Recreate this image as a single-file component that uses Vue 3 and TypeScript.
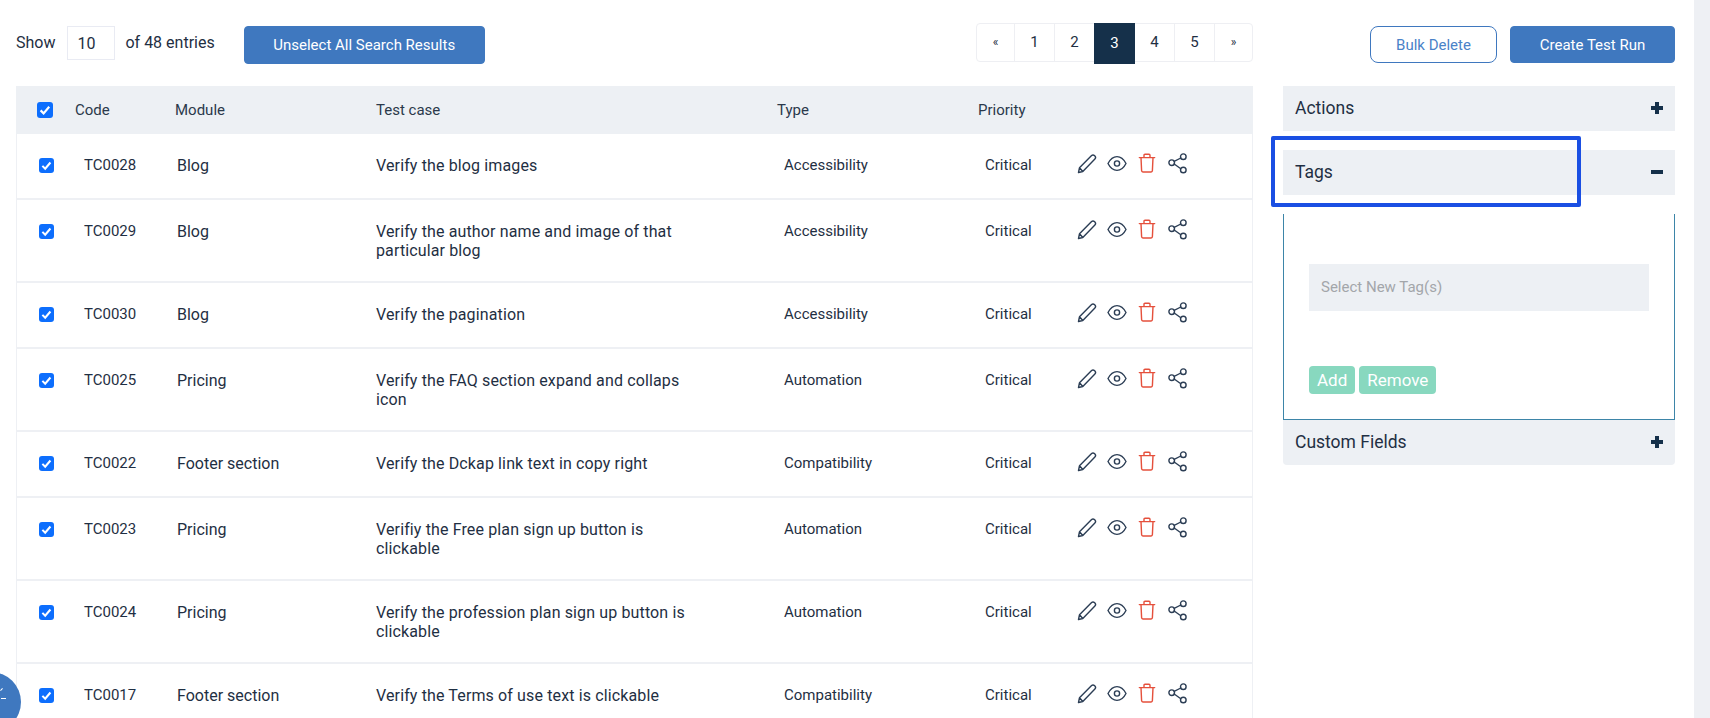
<script setup lang="ts">
interface TestCase {
  code: string
  module: string
  title: string
  type: string
}

const cases: TestCase[] = [
  { code: 'TC0028', module: 'Blog', title: 'Verify the blog images', type: 'Accessibility' },
  { code: 'TC0029', module: 'Blog', title: 'Verify the author name and image of that particular blog', type: 'Accessibility' },
  { code: 'TC0030', module: 'Blog', title: 'Verify the pagination', type: 'Accessibility' },
  { code: 'TC0025', module: 'Pricing', title: 'Verify the FAQ section expand and collaps icon', type: 'Automation' },
  { code: 'TC0022', module: 'Footer section', title: 'Verify the Dckap link text in copy right', type: 'Compatibility' },
  { code: 'TC0023', module: 'Pricing', title: 'Verifiy the Free plan sign up button is clickable', type: 'Automation' },
  { code: 'TC0024', module: 'Pricing', title: 'Verify the profession plan sign up button is clickable', type: 'Automation' },
  { code: 'TC0017', module: 'Footer section', title: 'Verify the Terms of use text is clickable', type: 'Compatibility' },
]

const pages = ['«', '1', '2', '3', '4', '5', '»']
</script>

<template>
  <div class="page">
    <main class="main">
      <div class="toolbar">
        <div class="left-tools">
          <span class="show-label">Show</span>
          <span class="size-box">10</span>
          <span class="entries">of 48 entries</span>
          <button class="btn btn-primary unselect">Unselect All Search Results</button>
        </div>
        <ul class="pagination">
          <li v-for="p in pages" :key="p" :class="{ active: p === '3', arrow: p === '«' || p === '»' }">{{ p }}</li>
        </ul>
      </div>

      <div class="table">
        <div class="row head">
          <span class="cell-check"><span class="check big"><svg viewBox="0 0 16 16"><path d="M3.6 8.4l3 3 5.6-6.6" /></svg></span></span>
          <span>Code</span>
          <span>Module</span>
          <span>Test case</span>
          <span>Type</span>
          <span>Priority</span>
          <span></span>
        </div>
        <div v-for="item in cases" :key="item.code" class="row">
          <span class="cell-check"><span class="check"><svg viewBox="0 0 16 16"><path d="M3.6 8.4l3 3 5.6-6.6" /></svg></span></span>
          <span class="code">{{ item.code }}</span>
          <span class="module">{{ item.module }}</span>
          <span class="title">{{ item.title }}</span>
          <span class="type">{{ item.type }}</span>
          <span class="priority">Critical</span>
          <span class="icons">
            <svg viewBox="0 0 20 21" class="ic"><path d="M1.5 19.5l1-4.800L14.600 2.600a2 2 0 0 1 2.800 0l.5.5a2 2 0 0 1 0 2.800L5.800 18.500 1.500 19.500zM2.500 14.700l3.300 3.800" /></svg>
            <svg viewBox="0 0 20 21" class="ic"><path d="M1 10.500C3.300 6 6.300 3.600 10 3.600s6.700 2.400 9 6.900c-2.300 4.500-5.300 6.900-9 6.900s-6.700-2.400-9-6.900z" /><circle cx="10" cy="10.500" r="2.600" /></svg>
            <svg viewBox="0 0 20 21" class="ic red"><path d="M2.300 4.600h15.400M4 4.600l.6 13c0 .9.500 1.400 1.300 1.400h8.200c.8 0 1.300-.5 1.300-1.400l.6-13M7 4.400V2.300c0-.6.4-1 1-1h4c.6 0 1 .4 1 1v2.100" /></svg>
            <svg viewBox="0 0 20 21" class="ic"><circle cx="4.700" cy="9.700" r="2.800" /><circle cx="16.300" cy="3.700" r="2.800" /><circle cx="16.300" cy="17" r="2.800" /><path d="M7.200 8.400l6.600-3.400M7.200 11l6.600 4.700" /></svg>
          </span>
        </div>
      </div>
    </main>

    <aside class="side">
      <div class="side-actions">
        <button class="btn btn-outline">Bulk Delete</button>
        <button class="btn btn-primary create">Create Test Run</button>
      </div>

      <div class="accordion-head first"><span>Actions</span><b class="plus"></b></div>

      <div class="tags-wrap">
        <div class="accordion-head"><span>Tags</span><b class="minus"></b></div>
        <div class="highlight"></div>
      </div>
      <div class="tags-body">
        <div class="tag-select">Select New Tag(s)</div>
        <div class="tag-btns">
          <button class="btn-green">Add</button>
          <button class="btn-green">Remove</button>
        </div>
      </div>

      <div class="accordion-head last"><span>Custom Fields</span><b class="plus"></b></div>
    </aside>

    <div class="scroll-strip"></div>
    <div class="fab"><span class="fab-mark"></span></div>
  </div>
</template>

<style>
html,
body {
  margin: 0;
  background: #fff;
  overflow: hidden;
}
</style>

<style scoped>
.page {
  position: relative;
  height: 718px;
  overflow: hidden;
  display: flex;
  font-family: Roboto, 'Liberation Sans', sans-serif;
  color: #1f2f43;
  font-size: 16px;
  padding-left: 16px;
  box-sizing: border-box;
}

.main {
  width: 1237px;
  flex-shrink: 0;
}

.toolbar {
  height: 86px;
  display: flex;
  justify-content: space-between;
  align-items: flex-start;
}

.left-tools {
  display: flex;
  align-items: flex-start;
  margin-top: 26px;
}

.show-label,
.entries {
  line-height: 34px;
}

.size-box {
  width: 48px;
  height: 34px;
  margin: 0 10px 0 12px;
  border: 1px solid #e9ebf3;
  line-height: 33px;
  padding-left: 9px;
  box-sizing: border-box;
}

.btn {
  font-family: inherit;
  font-size: 15px;
  border-radius: 4px;
  box-sizing: border-box;
  cursor: pointer;
}

.btn-primary {
  background: #3f78bf;
  border: 1px solid #3f78bf;
  color: #fff;
}

.unselect {
  width: 241px;
  height: 38px;
  margin-left: 29px;
}

.pagination {
  list-style: none;
  margin: 23px 0 0;
  padding: 0;
  display: flex;
  height: 39px;
  border: 1px solid #eeeff3;
  border-radius: 4px;
  box-sizing: border-box;
}

.pagination li {
  width: 40px;
  line-height: 37px;
  text-align: center;
  border-right: 1px solid #eeeff3;
  font-size: 15px;
  box-sizing: border-box;
}

.pagination li:first-child {
  width: 38px;
}

.pagination li:last-child {
  border-right: 0;
  width: 37px;
}

.pagination li.arrow {
  font-size: 12px;
}

.pagination li.active {
  background: #15304a;
  color: #fff;
  height: 41px;
  margin: -1px 0 -1px -1px;
  width: 41px;
  line-height: 41px;
  border-right: 0;
}

.table {
  border-left: 1px solid #eef0f4;
  border-right: 1px solid #eef0f4;
}

.row {
  display: grid;
  grid-template-columns: 59px 100px 200px 401px 201px 99px 1fr;
  min-height: 66px;
  padding: 22px 0 21px;
  line-height: 19px;
  border-bottom: 2px solid #eef0f4;
  align-items: start;
  box-sizing: border-box;
}

.head {
  min-height: 0;
  height: 48px;
  padding: 0;
  grid-template-columns: 59px 100px 201px 401px 201px 98px 1fr;
  align-items: center;
  background: #edf0f4;
  border-bottom: 0;
  margin: 0 -1px;
  font-size: 15px;
  color: #2b394b;
}

.cell-check {
  display: flex;
  padding-left: 22px;
}

.head .cell-check {
  padding-left: 21px;
}

.check {
  width: 15px;
  height: 15px;
  border-radius: 3px;
  background: #0d6efd;
  display: block;
  margin-top: 2px;
}

.check.big {
  width: 16px;
  height: 16px;
  margin-top: 0;
}

.check svg {
  display: block;
  width: 100%;
  height: 100%;
  fill: none;
  stroke: #fff;
  stroke-width: 2.2;
}

.code {
  padding-left: 8px;
  font-size: 15px;
}

.module {
  padding-left: 1px;
}

.title {
  padding-right: 74px;
  letter-spacing: 0.13px;
}

.type,
.priority {
  padding-left: 7px;
  font-size: 15px;
}

.icons {
  display: flex;
  gap: 10px;
  margin-top: -3px;
}

.ic {
  width: 20px;
  height: 21px;
  fill: none;
  stroke: #2c3e55;
  stroke-width: 1.4;
  stroke-linejoin: round;
  stroke-linecap: round;
}

.ic.red {
  stroke: #e5503c;
}

.side {
  width: 392px;
  margin-left: 30px;
  flex-shrink: 0;
}

.side-actions {
  display: flex;
  justify-content: flex-end;
  gap: 13px;
  padding-top: 26px;
  height: 86px;
  box-sizing: border-box;
}

.btn-outline {
  width: 127px;
  height: 37px;
  background: #fff;
  border: 1px solid #3f78bf;
  color: #4a82c8;
  border-radius: 8px;
}

.create {
  width: 165px;
  height: 37px;
}

.accordion-head {
  height: 45px;
  background: #edf0f4;
  display: flex;
  align-items: center;
  justify-content: space-between;
  padding: 0 12px 2px;
  font-size: 17.5px;
  color: #1f2f43;
  box-sizing: border-box;
}

.accordion-head.last {
  border-radius: 0 0 4px 4px;
}

.tags-wrap {
  position: relative;
  margin-top: 19px;
}

.highlight {
  position: absolute;
  left: -12px;
  top: -14px;
  width: 310px;
  height: 71px;
  border: 4px solid #1a4fe3;
  border-radius: 2px;
  box-sizing: border-box;
}

.tags-body {
  height: 206px;
  margin-top: 19px;
  border: 1px solid #3d85a8;
  border-top: 0;
  padding: 50px 25px 0;
  box-sizing: border-box;
}

.tag-select {
  height: 47px;
  background: #edf0f4;
  color: #a3a6aa;
  line-height: 47px;
  padding-left: 12px;
  font-size: 15px;
}

.tag-btns {
  display: flex;
  gap: 4px;
  margin-top: 55px;
}

.btn-green {
  height: 28px;
  padding: 0 8px;
  background: #88d8bf;
  border: 0;
  border-radius: 4px;
  color: #fff;
  font-family: inherit;
  font-size: 17px;
}

.plus,
.minus {
  position: relative;
  width: 12px;
  height: 12px;
  display: block;
}

.plus::before,
.minus::before {
  content: '';
  position: absolute;
  left: 0;
  top: 4px;
  width: 12px;
  height: 4px;
  background: #15304a;
}

.plus::after {
  content: '';
  position: absolute;
  left: 4px;
  top: 0;
  width: 4px;
  height: 12px;
  background: #15304a;
}

.scroll-strip {
  position: absolute;
  top: 0;
  right: 0;
  width: 16px;
  height: 100%;
  background: #eef0f4;
}

.fab {
  position: absolute;
  left: -39px;
  top: 672px;
  width: 60px;
  height: 60px;
  border-radius: 50%;
  background: #3f78bf;
}

.fab-mark {
  position: absolute;
  left: 40px;
  top: 26px;
  width: 5px;
  height: 1px;
  background: #fff;
}

.fab-mark::before {
  content: '';
  position: absolute;
  left: -1px;
  top: -9px;
  width: 3px;
  height: 1px;
  background: #fff;
  transform: rotate(-45deg);
}
</style>
